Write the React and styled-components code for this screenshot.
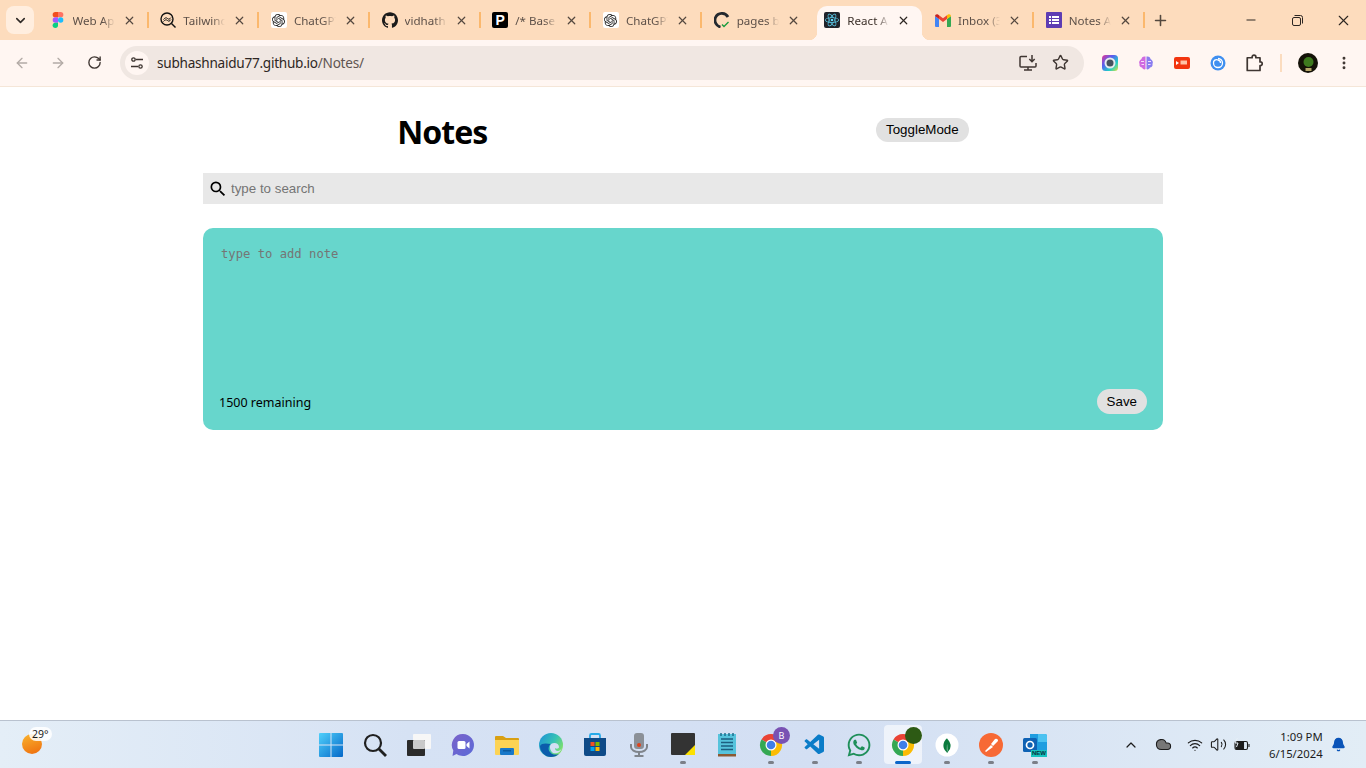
import React from 'react';
import styled, { createGlobalStyle } from 'styled-components';
import { ChevronDown, X, Plus, Minus, ArrowLeft, ArrowRight, RotateCw, Star, ChevronUp, Wifi, Volume2, Bell, EllipsisVertical, Cloud } from 'lucide-react';
import { SiOpenai, SiReact, SiGithub, SiMongodb } from 'react-icons/si';
import { FaWhatsapp } from 'react-icons/fa';
import { VscVscode } from 'react-icons/vsc';
import { MdSearch } from 'react-icons/md';

const Global = createGlobalStyle`
  html, body { margin: 0; padding: 0; height: 100%; overflow: hidden; background: #fff; }
  #root { height: 100%; }
  * { box-sizing: border-box; }
`;

const Screen = styled.div`
  width: 1366px;
  height: 768px;
  display: flex;
  flex-direction: column;
  font-family: 'Noto Sans', 'Open Sans', sans-serif;
`;

/* ---------- tab strip ---------- */
const TabStrip = styled.div`
  height: 40px;
  flex: none;
  display: flex;
  align-items: flex-end;
  background: #fddcbd;
  padding-left: 6px;
`;
const TabMenu = styled.div`
  width: 28px;
  height: 28px;
  margin: 0 5px 6px 0;
  border-radius: 8px;
  background: #ffeedf;
  display: flex;
  align-items: center;
  justify-content: center;
  color: #2f2a26;
`;
const Tab = styled.div`
  position: relative;
  width: 110.7px;
  height: 34px;
  flex: none;
  display: flex;
  align-items: center;
  padding: 0 0 6px 10.5px;
  z-index: ${p => (p.$active ? 2 : 1)};
  &::before {
    content: '';
    display: ${p => (p.$active ? 'block' : 'none')};
    position: absolute;
    top: 0;
    bottom: 0;
    left: 3px;
    right: 3px;
    background: #fff6f2;
    border-radius: 10px 10px 0 0;
    z-index: -1;
  }
  &::after {
    content: '';
    display: ${p => (p.$sep ? 'block' : 'none')};
    position: absolute;
    right: 1px;
    top: 6px;
    width: 2px;
    height: 16px;
    background: #fbb86d;
  }
`;
const CornerLeft = styled.span`
  position: absolute;
  bottom: 0;
  left: -5px;
  width: 8px;
  height: 8px;
  background: radial-gradient(circle at 0 0, transparent 8px, #fff6f2 8.5px);
`;
const CornerRight = styled(CornerLeft)`
  left: auto;
  right: -5px;
  background: radial-gradient(circle at 100% 0, transparent 8px, #fff6f2 8.5px);
`;
const Favicon = styled.span`
  width: 16px;
  height: 16px;
  flex: none;
  display: flex;
  align-items: center;
  justify-content: center;
  background: ${p => p.$bg || 'transparent'};
  color: ${p => p.$fg || '#000'};
  border-radius: ${p => p.$radius || '2px'};
`;
const PerplexityP = styled.span`
  font: 700 14px/16px 'Liberation Sans', sans-serif;
  color: #fff;
`;
const TabTitle = styled.span`
  width: 42px;
  margin: 1px 0 0 7px;
  font-size: 11.6px;
  line-height: 16px;
  white-space: nowrap;
  overflow: hidden;
  color: ${p => (p.$active ? '#3c302a' : '#5d5048')};
  -webkit-mask-image: linear-gradient(90deg, #000 70%, transparent 100%);
  mask-image: linear-gradient(90deg, #000 70%, transparent 100%);
`;
const TabClose = styled.span`
  margin-left: 8px;
  display: flex;
  color: ${p => (p.$active ? '#2d2622' : '#54483f')};
`;
const NewTab = styled.div`
  width: 20px;
  height: 34px;
  margin-left: 5px;
  padding-bottom: 6px;
  display: flex;
  align-items: center;
  justify-content: center;
  color: #54483f;
`;
const WindowControls = styled.div`
  margin-left: auto;
  display: flex;
  align-self: stretch;
`;
const WinButton = styled.div`
  width: 46px;
  height: 40px;
  display: flex;
  align-items: center;
  justify-content: center;
  color: #2c2622;
`;

/* ---------- toolbar ---------- */
const Toolbar = styled.div`
  height: 47px;
  flex: none;
  display: flex;
  align-items: center;
  padding: 0 4px 1px 4px;
  background: #fff6f2;
  border-bottom: 1px solid #f5e6d8;
`;
const NavButton = styled.div`
  width: 36px;
  height: 36px;
  flex: none;
  display: flex;
  align-items: center;
  justify-content: center;
  color: ${p => p.$color || '#b3aba6'};
`;
const Omnibox = styled.div`
  width: 964px;
  height: 34px;
  margin: 0 8px 0 8px;
  flex: none;
  display: flex;
  align-items: center;
  border-radius: 17px;
  background: #f0e7e2;
  padding: 0 8px 0 5px;
`;
const SiteChip = styled.div`
  width: 24px;
  height: 24px;
  border-radius: 50%;
  background: #fff6f2;
  display: flex;
  align-items: center;
  justify-content: center;
`;
const Url = styled.div`
  margin-left: 8px;
  font-size: 13.6px;
  letter-spacing: -0.26px;
  color: #2f2724;
  flex: 1;
`;
const UrlPath = styled.span`
  color: #5f5551;
`;
const OmniIcon = styled.div`
  width: 32px;
  height: 32px;
  display: flex;
  align-items: center;
  justify-content: center;
  color: #3f3632;
`;
const ToolbarDivider = styled.div`
  width: 2px;
  height: 18px;
  margin: 0 8px 0 8px;
  background: #fbdcbf;
`;

/* ---------- notes page ---------- */
const Page = styled.main`
  flex: 1;
  background: #fff;
  min-height: 0;
`;
const Container = styled.div`
  width: 960px;
  margin: 0 auto;
`;
const Header = styled.header`
  height: 86px;
  display: flex;
  justify-content: space-around;
  align-items: flex-start;
`;
const Title = styled.h1`
  margin: 23px 0 0;
  font-size: 32px;
  line-height: 44px;
  font-weight: 700;
  color: #000;
  letter-spacing: -1px;
`;
const PillButton = styled.button`
  border: none;
  border-radius: 15px;
  background: #e1e1e1;
  padding: 0 10px ${p => p.$pb || 0}px;
  height: ${p => p.$h || 24}px;
  font: 13.33px 'Liberation Sans', Arial, sans-serif;
  color: #000;
  margin-top: ${p => p.$top || 0}px;
`;
const SearchBar = styled.div`
  height: 31px;
  display: flex;
  align-items: center;
  gap: 3px;
  padding-left: 5px;
  background: #e8e8e8;
  color: #000;
`;
const SearchInput = styled.input`
  flex: 1;
  border: none;
  outline: none;
  background: transparent;
  font: 13.33px 'Liberation Sans', Arial, sans-serif;
  padding: 0;
  &::placeholder { color: #757575; opacity: 1; }
`;
const NoteCard = styled.section`
  height: 202px;
  margin-top: 24px;
  padding: 16px;
  border-radius: 10px;
  background: #67d6cc;
  display: flex;
  flex-direction: column;
  justify-content: space-between;
`;
const NoteArea = styled.textarea`
  height: 130px;
  resize: none;
  border: 2px solid transparent;
  outline: none;
  background: transparent;
  padding: 0;
  font: 12.2px/16px 'DejaVu Sans Mono', monospace;
  &::placeholder { color: #757575; opacity: 1; }
`;
const NoteFooter = styled.div`
  display: flex;
  align-items: center;
  justify-content: space-between;
`;
const Remaining = styled.small`
  font-size: 12.5px;
  color: #000;
  margin-top: 2px;
`;

/* ---------- taskbar ---------- */
const Taskbar = styled.footer`
  height: 48px;
  flex: none;
  display: grid;
  grid-template-columns: 309px 748px 1fr;
  background: linear-gradient(90deg, #e4eef7 0%, #d6e2f4 30%, #d3dff3 60%, #e2edf6 100%);
  border-top: 1px solid #b9c2cf;
`;
const Weather = styled.div`
  position: relative;
  padding: 13px 0 0 22px;
`;
const Sun = styled.div`
  width: 20px;
  height: 20px;
  border-radius: 50%;
  background: linear-gradient(160deg, #f9b42e, #ee6c0d);
`;
const Temp = styled.span`
  position: absolute;
  left: 29px;
  top: 6px;
  height: 14px;
  padding: 0 3px;
  border-radius: 7px;
  background: rgba(255, 255, 255, 0.85);
  font-size: 10.5px;
  line-height: 14px;
  color: #1b1b1b;
`;
const Apps = styled.div`
  display: flex;
`;
const AppSlot = styled.div`
  position: relative;
  width: 44px;
  height: 47px;
  display: flex;
  align-items: center;
  justify-content: center;
  &::before {
    content: '';
    display: ${p => (p.$active ? 'block' : 'none')};
    position: absolute;
    inset: 4px 3px 4px 3px;
    background: rgba(255, 255, 255, 0.6);
    border-radius: 4px;
  }
  & > svg { position: relative; }
`;
const RunDot = styled.span`
  position: absolute;
  bottom: 4px;
  left: 50%;
  transform: translateX(-50%);
  width: ${p => (p.$active ? 16 : 6)}px;
  height: 3px;
  border-radius: 2px;
  background: ${p => (p.$active ? '#0a66c9' : '#7b7f88')};
`;
const Badge = styled.span`
  position: absolute;
  top: 6px;
  right: 3px;
  width: 17px;
  height: 17px;
  border-radius: 50%;
  background: ${p => p.$bg};
  color: #fff;
  font-size: 9px;
  line-height: 17px;
  text-align: center;
`;
const NewTag = styled.span`
  position: absolute;
  left: 18px;
  top: 29px;
  width: 16px;
  height: 7px;
  background: #16c4c0;
  color: #06333a;
  font: 700 6px/7px 'Liberation Sans', sans-serif;
  text-align: center;
`;
const Tray = styled.div`
  display: flex;
  align-items: center;
  color: #1c1c1c;
  padding-left: 66px;
`;
const TrayIcon = styled.div`
  display: flex;
  margin-left: ${p => p.$ml || 0}px;
`;
const Clock = styled.div`
  margin-left: 19px;
  font-size: 11.3px;
  line-height: 17px;
  text-align: right;
  color: #1b1b1b;
  white-space: nowrap;
`;

/* ---------- drawn icons ---------- */
const FigmaIcon = () => (
  <svg width="12" height="16" viewBox="0 0 12 18">
    <path d="M0 3a3 3 0 0 1 3-3h3v6H3a3 3 0 0 1-3-3z" fill="#f24e1e" />
    <path d="M6 0h3a3 3 0 0 1 0 6H6z" fill="#ff7262" />
    <path d="M0 9a3 3 0 0 1 3-3h3v6H3a3 3 0 0 1-3-3z" fill="#a259ff" />
    <circle cx="9" cy="9" r="3" fill="#1abcfe" />
    <path d="M0 15a3 3 0 0 1 3-3h3v3a3 3 0 0 1-6 0z" fill="#0acf83" />
  </svg>
);
const TailwindSearch = () => (
  <svg width="16" height="16" viewBox="0 0 16 16" fill="none" stroke="#111" strokeWidth="1.4">
    <circle cx="7" cy="7" r="6" />
    <path d="M11.5 11.5 15.5 15.5" />
    <path d="M3.5 7.5c1.5-2 3-2 4-1s2 1 3.500-1M3.500 9.500c1.500-2 3-2 4-1s2 1 3.500-1" strokeWidth="1" />
  </svg>
);
const PagesIcon = () => (
  <svg width="16" height="16" viewBox="0 0 16 16" fill="none">
    <path d="M14 5A7 7 0 0 0 1.500 5.500 7 7 0 0 0 6.500 15" stroke="#24292f" strokeWidth="2.8" />
    <path d="M8 12.500l2 2 4.500-4.500" stroke="#1a9c3e" strokeWidth="1.400" />
  </svg>
);
const GmailIcon = () => (
  <svg width="16" height="13" viewBox="0 0 16 13">
    <path d="M0 2l4 3v8H1a1 1 0 0 1-1-1z" fill="#4285f4" />
    <path d="M16 2l-4 3v8h3a1 1 0 0 0 1-1z" fill="#34a853" />
    <path d="M12 1.200 8 4.300 4 1.200V5l4 3 4-3z" fill="#ea4335" />
    <path d="M0 2.200C0 .5 1.800-.4 3 .6l1 .7V5L0 2z" fill="#c5221f" />
    <path d="M16 2.200c0-1.700-1.800-2.600-3-1.600l-1 .7V5l4-3z" fill="#fbbc04" />
  </svg>
);
const ListIcon = () => (
  <svg width="16" height="16" viewBox="0 0 16 16">
    <rect width="16" height="16" rx="1" fill="#5e3db3" />
    <path d="M3 4h2v2H3zM6 4h7v2H6zM3 7h2v2H3zM6 7h7v2H6zM3 10h2v2H3zM6 10h7v2H6z" fill="#fff" />
  </svg>
);
const TuneIcon = () => (
  <svg width="14" height="14" viewBox="0 0 14 14" fill="none" stroke="#3c332f" strokeWidth="1.3">
    <circle cx="3.500" cy="3.500" r="1.700" />
    <path d="M6 3.500h7M1 10.500h7" />
    <circle cx="10.500" cy="10.500" r="1.700" />
  </svg>
);
const InstallIcon = () => (
  <svg width="18" height="18" viewBox="0 0 18 18" fill="none" stroke="#3f3632" strokeWidth="1.500">
    <path d="M8 2.500H2a1 1 0 0 0-1 1V12a1 1 0 0 0 1 1h14a1 1 0 0 0 1-1V9" />
    <path d="M5 16h8M9 13v3" />
    <path d="M13 1v6.500M10.300 5l2.700 2.700L15.700 5" />
  </svg>
);
const RestoreIcon = () => (
  <svg width="11" height="11" viewBox="0 0 11 11" fill="none" stroke="#2c2622">
    <rect x=".5" y="2.500" width="8" height="8" rx="1.500" />
    <path d="M2.500.5h6a2 2 0 0 1 2 2v6" />
  </svg>
);
const LensExt = () => (
  <svg width="16" height="16" viewBox="0 0 16 16">
    <defs>
      <linearGradient id="lensG" x1="0" y1="0" x2="1" y2="1">
        <stop offset="0" stopColor="#e8358f" />
        <stop offset=".35" stopColor="#5a5cf0" />
        <stop offset=".7" stopColor="#1fd0c8" />
        <stop offset="1" stopColor="#e6e03a" />
      </linearGradient>
    </defs>
    <rect width="16" height="16" rx="3.500" fill="url(#lensG)" />
    <circle cx="8" cy="8" r="5.500" fill="#e6eaee" />
    <circle cx="8" cy="8" r="3.500" fill="#46525f" />
  </svg>
);
const BrainExt = () => (
  <svg width="16" height="16" viewBox="0 0 16 16">
    <path d="M7.500 1.500C5 1 3.500 2.500 3.500 4 1.500 5 .5 7 1.500 9c-.5 2 1 3.500 2.500 3.500.5 1.500 2.500 2.500 3.500 1.500z" fill="#d06ae0" />
    <path d="M8.500 1.500C11 1 12.500 2.500 12.500 4c2 1 3 3 2 5 .5 2-1 3.500-2.500 3.500-.5 1.500-2.500 2.500-3.500 1.500z" fill="#8a7df0" />
    <path d="M3 6.500h3M3.500 9.500H6M10 6.500h3M10 9.500h2.500" stroke="#fbe6ff" strokeWidth=".9" />
  </svg>
);
const SlidesExt = () => (
  <svg width="16" height="12" viewBox="0 0 16 12">
    <rect width="16" height="12" rx="2" fill="#f2350f" />
    <path d="M2 4l3 2-3 2z" fill="#fff" />
    <path d="M6.500 3.500H13v4H6.500z" fill="#ffc2a6" />
  </svg>
);
const SwirlExt = () => (
  <svg width="16" height="16" viewBox="0 0 16 16" fill="none">
    <circle cx="8" cy="8" r="7.500" fill="#3f8ff0" />
    <path d="M8 3.500A4.500 4.500 0 1 1 3.500 8 3 3 0 0 1 8 5a3 3 0 0 1 2.500 3" stroke="#fff" strokeWidth="1.300" />
  </svg>
);
const ExtensionIcon = () => (
  <svg width="18" height="18" viewBox="0 0 24 24" fill="none" stroke="#3f3632" strokeWidth="2.300" strokeLinejoin="round">
    <path d="M3 5h6.500V4a2.500 2.500 0 0 1 5 0v1H20v5.500h.5a2.500 2.500 0 0 1 0 5H20V22H3z" />
  </svg>
);
const Avatar = () => (
  <svg width="20" height="20" viewBox="0 0 20 20">
    <circle cx="10" cy="10" r="10" fill="#141208" />
    <circle cx="10.500" cy="9" r="5" fill="#3d7a1e" />
    <path d="M7.500 15h6v3h-6z" fill="#b6a76a" />
  </svg>
);
const WinLogo = () => (
  <svg width="24" height="24" viewBox="0 0 24 24">
    <defs>
      <linearGradient id="winG" x1="0" y1="0" x2="1" y2="1">
        <stop offset="0" stopColor="#4fd0fb" />
        <stop offset="1" stopColor="#0568c8" />
      </linearGradient>
    </defs>
    <path d="M0 1a1 1 0 0 1 1-1h10.500v11.500H0zM12.500 0H23a1 1 0 0 1 1 1v10.500H12.500zM0 12.500h11.500V24H1a1 1 0 0 1-1-1zM12.500 12.500H24V23a1 1 0 0 1-1 1H12.500z" fill="url(#winG)" />
  </svg>
);
const TaskSearch = () => (
  <svg width="24" height="24" viewBox="0 0 24 24" fill="none" stroke="#202020" strokeWidth="2.200">
    <circle cx="10" cy="10" r="8" />
    <path d="M16 16l7 7" strokeWidth="2.800" />
  </svg>
);
const TaskView = () => (
  <svg width="24" height="24" viewBox="0 0 24 24">
    <rect x="6" y="1" width="18" height="15" rx="1" fill="#f7f7f7" />
    <rect x="0" y="7" width="18" height="16" rx="1" fill="#2a2a2a" />
    <rect x="6" y="7" width="12" height="9" rx="1" fill="#c9c9c9" />
  </svg>
);
const MeetIcon = () => (
  <svg width="24" height="24" viewBox="0 0 24 24">
    <defs>
      <linearGradient id="meetG" x1="0" y1="0" x2="1" y2="1">
        <stop offset="0" stopColor="#7a62c9" />
        <stop offset="1" stopColor="#5b6ad8" />
      </linearGradient>
    </defs>
    <path d="M12 1a11 11 0 1 1-6.500 19.900L1.500 23l.8-5.500A11 11 0 0 1 12 1z" fill="url(#meetG)" />
    <rect x="6.500" y="8" width="8" height="8" rx="1.500" fill="#fff" />
    <path d="M15.500 11l3-2.500v7l-3-2.500z" fill="#fff" />
  </svg>
);
const FolderIcon = () => (
  <svg width="24" height="24" viewBox="0 0 24 24">
    <path d="M0 4a1 1 0 0 1 1-1h7l3 2h12a1 1 0 0 1 1 1v2H0z" fill="#d9a012" />
    <path d="M0 7h24v14a1 1 0 0 1-1 1H1a1 1 0 0 1-1-1z" fill="#fcd354" />
    <rect x="5" y="15" width="14" height="7" rx="1" fill="#1878c9" />
    <rect x="8" y="17" width="8" height="1.500" fill="#0c5a9e" />
  </svg>
);
const EdgeIcon = () => (
  <svg width="24" height="24" viewBox="0 0 24 24">
    <defs>
      <linearGradient id="edgeG" x1="0" y1="0" x2="1" y2=".6">
        <stop offset="0" stopColor="#1d8fd8" />
        <stop offset=".6" stopColor="#36c2b5" />
        <stop offset="1" stopColor="#7fe06a" />
      </linearGradient>
    </defs>
    <circle cx="12" cy="12" r="12" fill="url(#edgeG)" />
    <path d="M1 13c0 6 5 11 11 11 3 0 6-1 8-3-3 1-7 1-9-2-2-2-2-6 1-8-5-1-10-1-11 2z" fill="#0b5cab" />
    <path d="M12 11c3-2 8-1 8 3 0 2-3 2-4 1 0 2 1 3 3 3 1 0 3-1 4-3-2 5-6 6-9 5-3-2-4-7-2-9z" fill="#d3dff3" />
  </svg>
);
const StoreIcon = () => (
  <svg width="24" height="24" viewBox="0 0 24 24">
    <path d="M7 6V2.500A1.500 1.500 0 0 1 8.500 1h7A1.500 1.500 0 0 1 17 2.500V6" fill="none" stroke="#25a9e8" strokeWidth="1.800" />
    <path d="M1 5h22v16a2 2 0 0 1-2 2H3a2 2 0 0 1-2-2z" fill="#0e4a87" />
    <rect x="7.500" y="9" width="4" height="4" fill="#f25022" />
    <rect x="12.500" y="9" width="4" height="4" fill="#7fba00" />
    <rect x="7.500" y="14" width="4" height="4" fill="#00a4ef" />
    <rect x="12.500" y="14" width="4" height="4" fill="#ffb900" />
  </svg>
);
const MicIcon = () => (
  <svg width="24" height="24" viewBox="0 0 24 24">
    <rect x="7" y="0" width="10" height="16" rx="3" fill="#8b9097" />
    <path d="M4 11v3a8 5 0 0 0 16 0v-3" fill="none" stroke="#80858c" strokeWidth="2" />
    <rect x="11" y="18" width="2" height="4" fill="#80858c" />
    <rect x="7.500" y="22" width="9" height="2" fill="#80858c" />
    <circle cx="12" cy="12" r="2" fill="#e0431c" />
  </svg>
);
const StickyIcon = () => (
  <svg width="24" height="24" viewBox="0 0 24 24">
    <rect x="0" y="0" width="24" height="22" rx="1" fill="#333" />
    <path d="M24 12v10H14z" fill="#fce100" />
  </svg>
);
const NotepadIcon = () => (
  <svg width="18" height="24" viewBox="0 0 18 24">
    <rect x="0" y="1" width="18" height="20" fill="#56c3dc" />
    <path d="M3 0v3M7 0v3M11 0v3M15 0v3" stroke="#1c6f8d" strokeWidth="1.500" />
    <path d="M3 6h12M3 9.500h12M3 13h12M3 16.500h12" stroke="#1c5f80" strokeWidth="1.300" />
    <rect x="0" y="21" width="18" height="2.500" fill="#8b5a33" />
  </svg>
);
const ChromeIcon = () => (
  <svg width="24" height="24" viewBox="0 0 24 24">
    <path d="M12 12 2.470 6.500A11 11 0 0 1 21.530 6.500z" fill="#ea4335" />
    <path d="M12 12l9.530-5.500A11 11 0 0 1 12 23z" fill="#fbbc04" />
    <path d="M12 12v11A11 11 0 0 1 2.470 6.500z" fill="#34a853" />
    <circle cx="12" cy="12" r="5.500" fill="#fff" />
    <circle cx="12" cy="12" r="4.300" fill="#3f7ee8" />
  </svg>
);
const OutlookIcon = () => (
  <svg width="24" height="24" viewBox="0 0 24 24">
    <path d="M7 1h15a2 2 0 0 1 2 2v16H7z" fill="#1f9de0" />
    <path d="M15 1h7a2 2 0 0 1 2 2v6h-9z" fill="#4cc2f1" />
    <rect x="0" y="5" width="14" height="14" rx="1.500" fill="#0f62b4" />
    <circle cx="7" cy="12" r="3.500" fill="none" stroke="#fff" strokeWidth="1.700" />
  </svg>
);
const MongoIcon = () => (
  <svg width="24" height="24" viewBox="0 0 24 24">
    <circle cx="12" cy="12" r="11.500" fill="#fff" />
    <foreignObject x="4" y="4" width="16" height="16">
      <SiMongodb size={16} color="#0a7a3d" />
    </foreignObject>
  </svg>
);
const PostmanIcon = () => (
  <svg width="24" height="24" viewBox="0 0 24 24">
    <circle cx="12" cy="12" r="12" fill="#f76935" />
    <path d="M6 18l6-6 2 2-7 5zM12 11l4-5a2 2 0 0 1 3 2l-5 5z" fill="#fff" />
  </svg>
);
const BatteryIcon = () => (
  <svg width="16" height="14" viewBox="0 0 16 14" fill="none" stroke="#1c1c1c" strokeWidth="1.100">
    <rect x="1" y="3.500" width="12.500" height="8" rx="1.500" />
    <path d="M15 6v3" />
    <path d="M2 4.500h7.500v6H2z" fill="#1c1c1c" />
    <path d="M3.500 0 1 5h3L2.500 9" stroke="#e8f0f7" strokeWidth="1" />
  </svg>
);

const tabs = [
  { title: 'Web App', icon: <FigmaIcon />, sep: true },
  { title: 'Tailwind', icon: <TailwindSearch />, sep: true },
  { title: 'ChatGPT', icon: <Favicon $bg="#fff"><SiOpenai size={13} color="#222" /></Favicon>, sep: true },
  { title: 'vidhath', icon: <SiGithub size={16} color="#1b1b1b" />, sep: true },
  { title: '/* Base', icon: <Favicon $bg="#000"><PerplexityP>P</PerplexityP></Favicon>, sep: true },
  { title: 'ChatGPT', icon: <Favicon $bg="#fff"><SiOpenai size={13} color="#222" /></Favicon>, sep: true },
  { title: 'pages b', icon: <PagesIcon /> },
  { title: 'React A', icon: <Favicon $bg="#20232a"><SiReact size={14} color="#61dafb" /></Favicon>, active: true },
  { title: 'Inbox (3', icon: <GmailIcon />, sep: true },
  { title: 'Notes A', icon: <ListIcon />, sep: true },
];

const apps = [
  { icon: <WinLogo /> },
  { icon: <TaskSearch /> },
  { icon: <TaskView /> },
  { icon: <MeetIcon /> },
  { icon: <FolderIcon /> },
  { icon: <EdgeIcon /> },
  { icon: <StoreIcon /> },
  { icon: <MicIcon /> },
  { icon: <StickyIcon />, run: true },
  { icon: <NotepadIcon /> },
  { icon: <ChromeIcon />, run: true, badge: 'B', badgeBg: '#7952b3' },
  { icon: <VscVscode size={24} color="#0a7cc8" />, run: true },
  { icon: <FaWhatsapp size={26} color="#1f8f5a" />, run: true },
  { icon: <ChromeIcon />, active: true, run: true, badge: ' ', badgeBg: '#2d5a14' },
  { icon: <MongoIcon />, run: true },
  { icon: <PostmanIcon />, run: true },
  { icon: <OutlookIcon />, run: true, tag: 'NEW' },
];

export default function App() {
  return (
    <Screen>
      <Global />
      <TabStrip>
        <TabMenu><ChevronDown size={15} strokeWidth={2.5} /></TabMenu>
        {tabs.map((t, i) => (
          <Tab key={i} $active={t.active} $sep={t.sep}>
            {t.active && <CornerLeft />}
            {t.active && <CornerRight />}
            <Favicon>{t.icon}</Favicon>
            <TabTitle $active={t.active}>{t.title}</TabTitle>
            <TabClose $active={t.active}><X size={13} strokeWidth={2.2} /></TabClose>
          </Tab>
        ))}
        <NewTab><Plus size={17} strokeWidth={2.2} /></NewTab>
        <WindowControls>
          <WinButton><Minus size={14} strokeWidth={1.7} /></WinButton>
          <WinButton><RestoreIcon /></WinButton>
          <WinButton><X size={17} strokeWidth={1.6} /></WinButton>
        </WindowControls>
      </TabStrip>

      <Toolbar>
        <NavButton><ArrowLeft size={16} /></NavButton>
        <NavButton><ArrowRight size={16} /></NavButton>
        <NavButton $color="#3f3632"><RotateCw size={15} strokeWidth={2.2} /></NavButton>
        <Omnibox>
          <SiteChip><TuneIcon /></SiteChip>
          <Url>subhashnaidu77.github.io<UrlPath>/Notes/</UrlPath></Url>
          <OmniIcon><InstallIcon /></OmniIcon>
          <OmniIcon><Star size={17} strokeWidth={2} /></OmniIcon>
        </Omnibox>
        <NavButton><LensExt /></NavButton>
        <NavButton><BrainExt /></NavButton>
        <NavButton><SlidesExt /></NavButton>
        <NavButton><SwirlExt /></NavButton>
        <NavButton><ExtensionIcon /></NavButton>
        <ToolbarDivider />
        <NavButton><Avatar /></NavButton>
        <NavButton $color="#3f3632"><EllipsisVertical size={16} strokeWidth={2.4} /></NavButton>
      </Toolbar>

      <Page>
        <Container>
          <Header>
            <Title>Notes</Title>
            <PillButton $top={31} $pb={1}>ToggleMode</PillButton>
          </Header>
          <SearchBar>
            <MdSearch size={20} />
            <SearchInput placeholder="type to search" />
          </SearchBar>
          <NoteCard>
            <NoteArea placeholder="type to add note" />
            <NoteFooter>
              <Remaining>1500 remaining</Remaining>
              <PillButton $h={25}>Save</PillButton>
            </NoteFooter>
          </NoteCard>
        </Container>
      </Page>

      <Taskbar>
        <Weather>
          <Sun />
          <Temp>29°</Temp>
        </Weather>
        <Apps>
          {apps.map((a, i) => (
            <AppSlot key={i} $active={a.active}>
              {a.icon}
              {a.badge && <Badge $bg={a.badgeBg}>{a.badge}</Badge>}
              {a.tag && <NewTag>{a.tag}</NewTag>}
              {a.run && <RunDot $active={a.active} />}
            </AppSlot>
          ))}
        </Apps>
        <Tray>
          <TrayIcon><ChevronUp size={16} strokeWidth={1.8} /></TrayIcon>
          <TrayIcon $ml={16}><Cloud size={17} fill="#777" strokeWidth={1.5} /></TrayIcon>
          <TrayIcon $ml={15}><Wifi size={16} strokeWidth={1.8} /></TrayIcon>
          <TrayIcon $ml={7}><Volume2 size={17} strokeWidth={1.5} /></TrayIcon>
          <TrayIcon $ml={7}><BatteryIcon /></TrayIcon>
          <Clock>1:09 PM<br />6/15/2024</Clock>
          <TrayIcon $ml={8}><Bell size={15} fill="#0a54b8" color="#0a54b8" /></TrayIcon>
        </Tray>
      </Taskbar>
    </Screen>
  );
}
